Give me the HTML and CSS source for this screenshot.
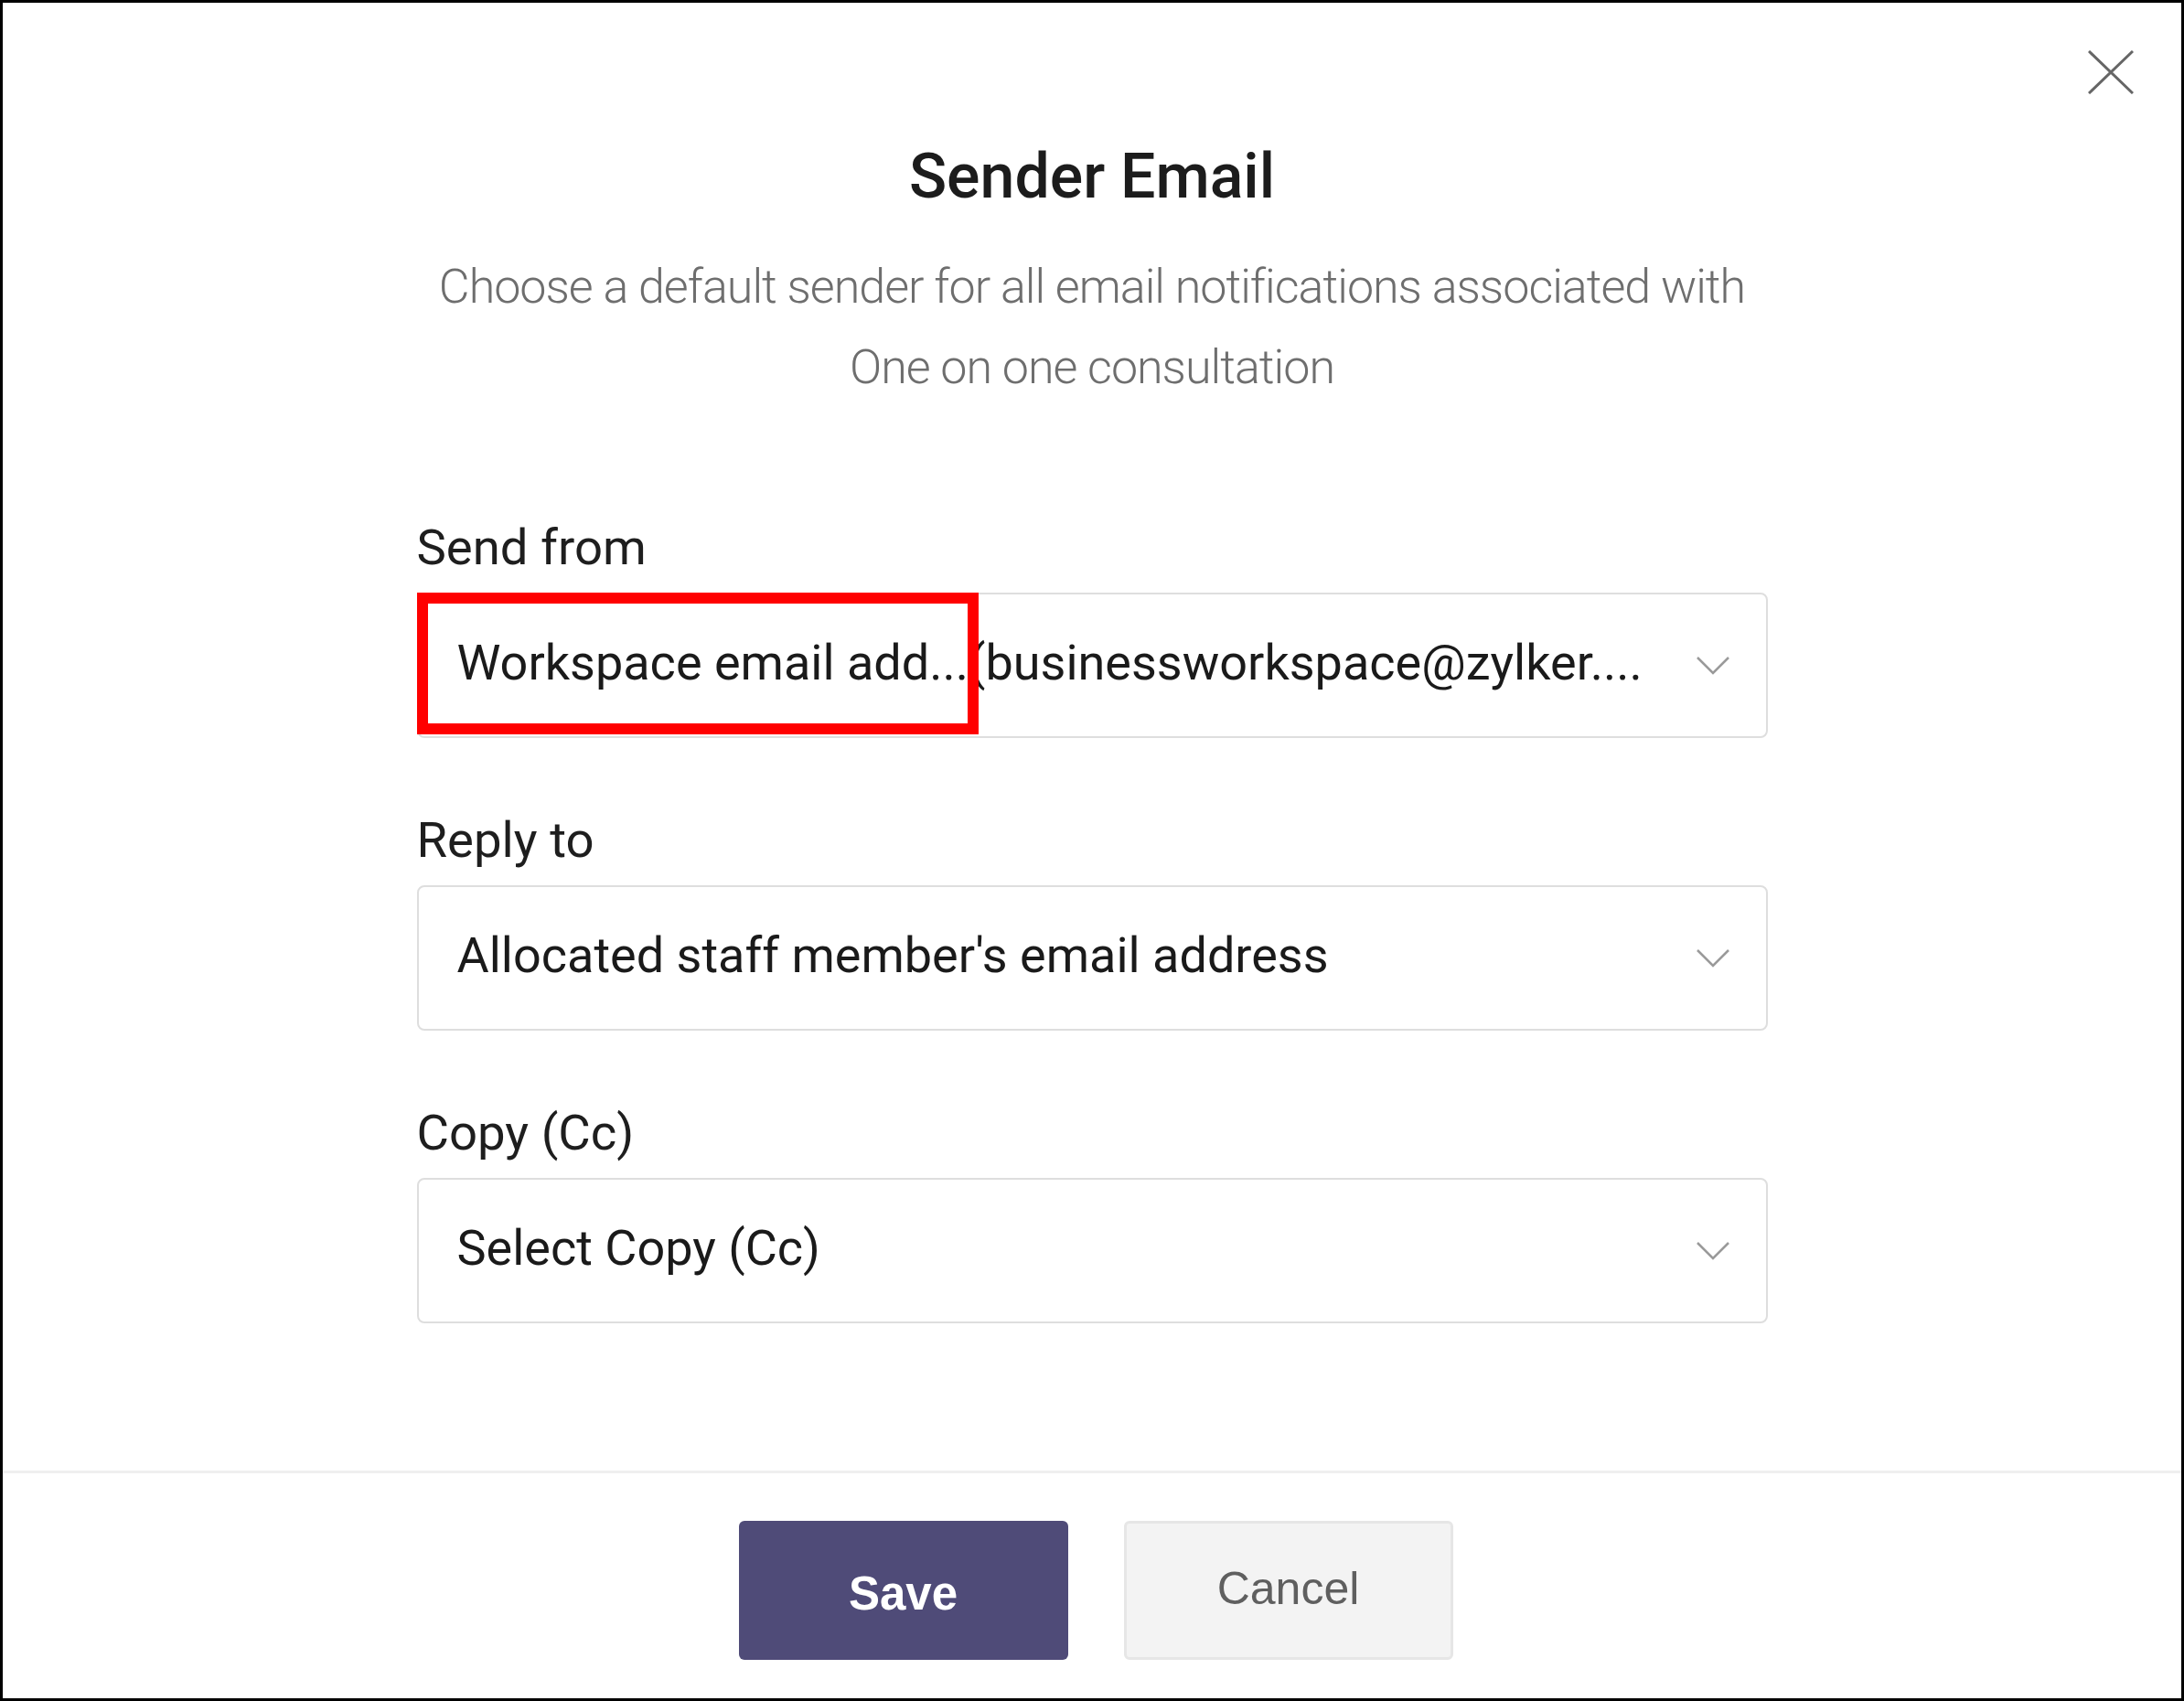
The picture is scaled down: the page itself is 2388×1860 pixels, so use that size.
FILE: index.html
```html
<!DOCTYPE html>
<html lang="en">
<head>
<meta charset="utf-8">
<title>Sender Email</title>
<link rel="stylesheet" href="styles.css">
</head>
<body>
<div class="modal">
  <button class="close" aria-label="Close">
    <svg width="50" height="48" viewBox="0 0 50 48"><path d="M1 1 L49 47 M49 1 L1 47" stroke="#666" stroke-width="3" fill="none"/></svg>
  </button>
  <div class="body">
    <h1 class="title">Sender Email</h1>
    <p class="subtitle">Choose a default sender for all email notifications associated with<br>One on one consultation</p>
    <div class="form">
      <div class="field">
        <label class="label">Send from</label>
        <div class="select">
          <span class="value"><span class="name">Workspace email add...</span><span class="mail">(businessworkspace@zylker....</span></span>
          <svg class="chev" width="36" height="20" viewBox="0 0 36 20"><path d="M1 1 L18 18 L35 1" stroke="#9a9a9a" stroke-width="2.5" fill="none"/></svg>
          <div class="highlight"></div>
        </div>
      </div>
      <div class="field">
        <label class="label">Reply to</label>
        <div class="select">
          <span class="value">Allocated staff member's email address</span>
          <svg class="chev" width="36" height="20" viewBox="0 0 36 20"><path d="M1 1 L18 18 L35 1" stroke="#9a9a9a" stroke-width="2.5" fill="none"/></svg>
        </div>
      </div>
      <div class="field">
        <label class="label">Copy (Cc)</label>
        <div class="select">
          <span class="value">Select Copy (Cc)</span>
          <svg class="chev" width="36" height="20" viewBox="0 0 36 20"><path d="M1 1 L18 18 L35 1" stroke="#9a9a9a" stroke-width="2.5" fill="none"/></svg>
        </div>
      </div>
    </div>
  </div>
  <div class="footer">
    <button class="btn save">Save</button>
    <button class="btn cancel">Cancel</button>
  </div>
</div>
</body>
</html>
```
FILE: styles.css
```css
* { box-sizing: border-box; }
html, body { margin: 0; padding: 0; background: #fff; }
body { font-family: Roboto, "Liberation Sans", sans-serif; }
.modal {
  position: relative;
  width: 2388px;
  height: 1860px;
  border: 3px solid #000;
  background: #fff;
  display: flex;
  flex-direction: column;
}
.close {
  position: absolute;
  top: 52px;
  right: 52px;
  border: 0;
  padding: 0;
  background: none;
  width: 50px;
  height: 48px;
}
.close svg { display: block; }
.body {
  flex: 1;
  display: flex;
  flex-direction: column;
  align-items: center;
  padding-top: 150px;
}
.title {
  margin: 0;
  font-size: 68px;
  line-height: 80px;
  font-weight: 500;
  color: #1c1c1c;
}
.subtitle {
  margin: 37px 0 0;
  font-size: 52px;
  line-height: 88px;
  font-weight: 300;
  letter-spacing: -1px;
  color: #6e6e6e;
  text-align: center;
}
.form {
  width: 1477px;
  margin-top: 120px;
  display: flex;
  flex-direction: column;
  gap: 79px;
}
.field { display: flex; flex-direction: column; gap: 18px; }
.label {
  font-size: 54.5px;
  line-height: 64px;
  color: #1e1e1e;
}
.select {
  position: relative;
  height: 159px;
  border: 2.5px solid #dedede;
  border-radius: 8px;
  display: flex;
  align-items: center;
  padding: 0 40px 6px 42px;
}
.value {
  flex: 1;
  font-size: 54px;
  line-height: 64px;
  color: #1a1a1a;
  white-space: nowrap;
}
.chev { display: block; margin-top: 6px; }
.highlight {
  position: absolute;
  left: -2px;
  top: -2px;
  width: 614px;
  height: 155px;
  border: 12px solid #ff0000;
}
.footer {
  border-top: 3px solid #efefef;
  display: flex;
  justify-content: center;
  gap: 61px;
  padding: 52px 0 42px 8px;
}
.btn {
  width: 360px;
  height: 152px;
  border-radius: 6px;
  font-family: "Liberation Sans", Arial, sans-serif;
}
.save {
  background: #4f4b78;
  border: 0;
  color: #fff;
  font-weight: bold;
  font-size: 51px;
  padding-top: 8px;
}
.cancel {
  background: #f3f3f3;
  border: 3px solid #e6e6e6;
  color: #5f5f5f;
  font-size: 50px;
  padding-bottom: 6px;
}
```
